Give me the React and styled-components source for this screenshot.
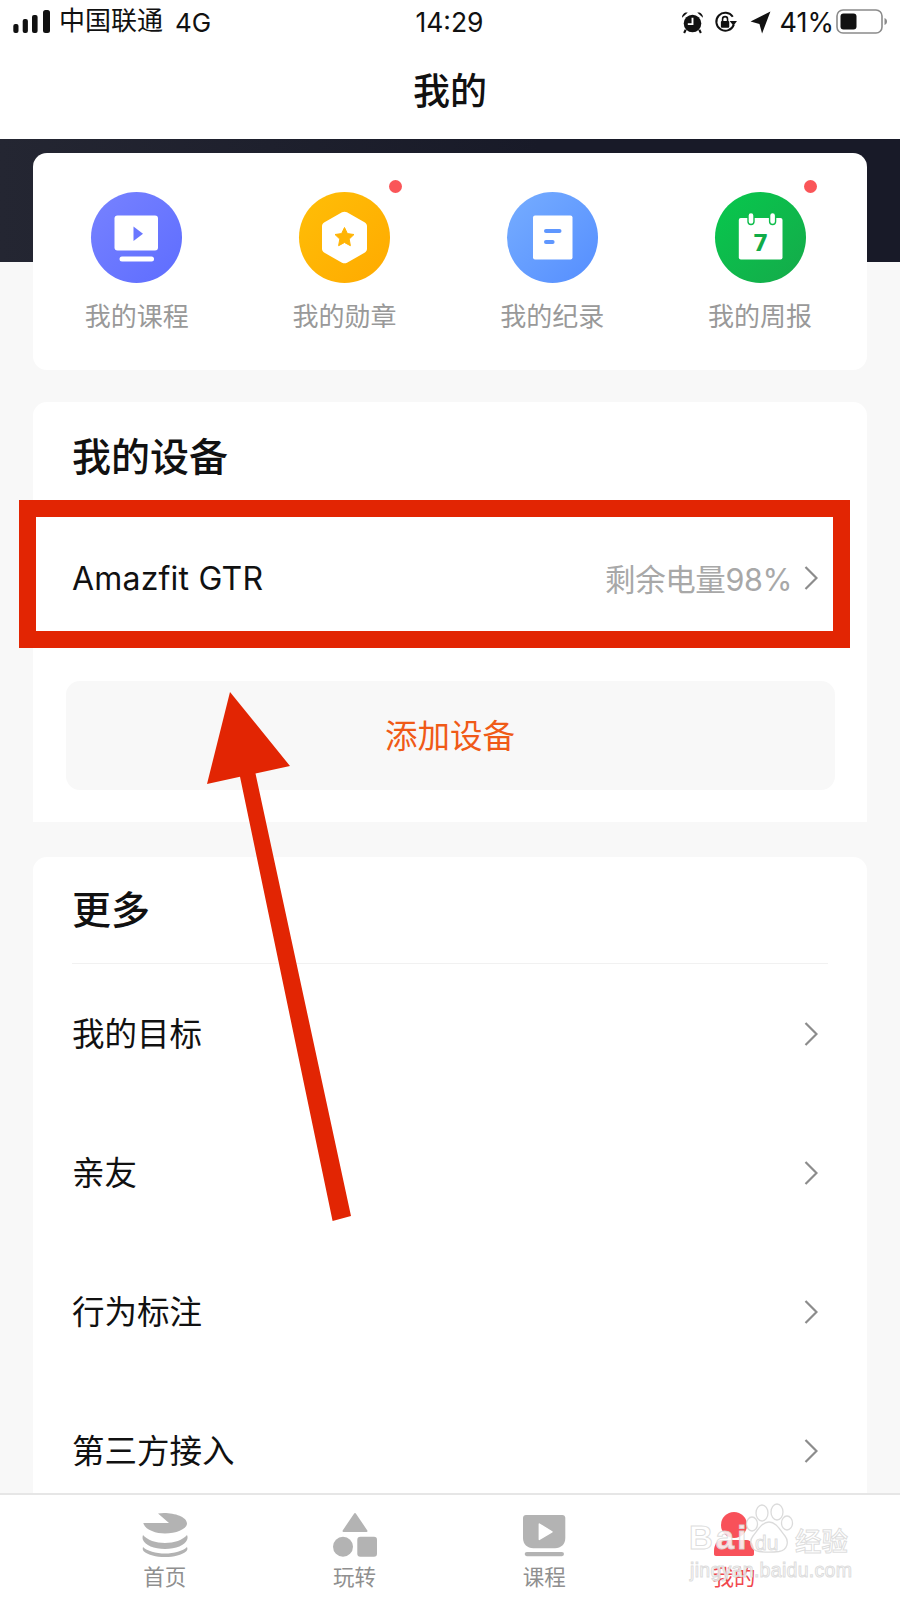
import React from "react";
import styled, { createGlobalStyle } from "styled-components";

const Global = createGlobalStyle`
  html, body { margin: 0; padding: 0; background: #fff; }
  body { font-family: Inter, "Noto Sans CJK SC", sans-serif; color: #111; }
  * { box-sizing: border-box; }
`;

const Page = styled.div`
  position: relative;
  width: 900px;
  height: 1600px;
  overflow: hidden;
  background: #f8f8f8;
  display: flex;
  flex-direction: column;
`;

const StatusBar = styled.header`
  height: 44px;
  background: #fff;
  display: grid;
  grid-template-columns: 1fr auto 1fr;
  align-items: center;
  padding: 0 12px 0 13px;
  color: #111;
`;
const StatusLeft = styled.div`
  display: flex;
  align-items: center;
`;
const Carrier = styled.span`
  margin-left: 9px;
  font-size: 26px;
  line-height: 40px;
  margin-top: -2px;
`;
const Network = styled.span`
  margin-left: 12px;
  font-size: 26px;
`;
const Clock = styled.span`
  font-size: 26.5px;
  margin-right: 2px;
`;
const StatusRight = styled.div`
  display: flex;
  align-items: center;
  justify-content: flex-end;
`;
const StatusIconGap = styled.span`
  width: ${(p) => p.$w}px;
`;
const Percent = styled.span`
  font-size: 27px;
  margin: 0 2px 0 9px;
`;

const NavBar = styled.div`
  height: 95px;
  background: #fff;
  display: flex;
  align-items: center;
  justify-content: center;
  padding-bottom: 6px;
  font-size: 37px;
  font-weight: 500;
  color: #111;
`;

const Content = styled.main`
  flex: 1;
  min-height: 0;
  padding: 14px 33px 0;
  display: flex;
  flex-direction: column;
  background:
    linear-gradient(90deg, #242632 0%, #24263a00 60%) top left / 100% 123px no-repeat,
    linear-gradient(#181a28, #181a28) top left / 100% 123px no-repeat,
    #f8f8f8;
`;

const Card = styled.section`
  background: #fff;
  border-radius: ${(p) => (p.$flatBottom ? "14px 14px 0 0" : "14px")};
  margin-top: ${(p) => p.$top || 0}px;
  flex: ${(p) => (p.$grow ? 1 : "none")};
`;

const ShortcutGrid = styled.div`
  display: grid;
  grid-template-columns: repeat(4, 1fr);
  height: 217px;
  padding: 38.5px 3px 0 0;
`;
const Shortcut = styled.div`
  position: relative;
  display: flex;
  flex-direction: column;
  align-items: center;
`;
const Dot = styled.span`
  position: absolute;
  top: -11.5px;
  left: 148px;
  width: 13px;
  height: 13px;
  border-radius: 50%;
  background: #fa5558;
`;
const Disc = styled.div`
  width: 91px;
  height: 91px;
  border-radius: 50%;
  background: linear-gradient(135deg, ${(p) => p.$from}, ${(p) => p.$to});
  display: flex;
`;
const ShortcutLabel = styled.span`
  margin-top: 16.5px;
  font-size: 26px;
  line-height: 36px;
  color: #999;
`;

const SectionTitle = styled.h2`
  margin: 0;
  height: ${(p) => p.$h}px;
  padding: ${(p) => (p.$rule ? "0 0 6px" : "0 39px 8px")};
  margin-inline: ${(p) => (p.$rule ? "39px" : "0")};
  display: flex;
  align-items: center;
  font-size: 39px;
  font-weight: 500;
  color: #111;
  border-bottom: ${(p) => (p.$rule ? "1px solid #f1f1f1" : "none")};
`;

const Row = styled.div`
  position: relative;
  height: ${(p) => p.$h}px;
  display: flex;
  align-items: center;
  justify-content: space-between;
  padding: 0 49px 0 39px;
  font-size: 32.5px;
  color: #111;
`;
const RowLabel = styled.span`
  padding-bottom: 4px;
`;
const DeviceName = styled.span`
  font-size: 32px;
  letter-spacing: 0.2px;
`;
const RowRight = styled.div`
  display: flex;
  align-items: center;
  gap: 12px;
`;
const Battery = styled.span`
  font-size: 30.5px;
  letter-spacing: -0.4px;
  color: #a8a8a8;
`;
const Highlight = styled.div`
  position: absolute;
  top: -14px;
  bottom: -6px;
  left: -14.5px;
  right: 17px;
  border: 17px solid #e22503;
  pointer-events: none;
`;
const AddButton = styled.div`
  margin: 39px 32.5px 32px;
  height: 109px;
  border-radius: 14px;
  background: #f8f8f8;
  display: flex;
  align-items: center;
  justify-content: center;
  padding-bottom: 4px;
  font-size: 32.5px;
  color: #f05a17;
`;

const TabBar = styled.nav`
  height: 107px;
  flex: none;
  background: #fff;
  border-top: 2px solid #e6e6e6;
  display: grid;
  grid-template-columns: repeat(4, 1fr);
  padding: 17px 71px 0 70px;
`;
const Tab = styled.div`
  display: flex;
  flex-direction: column;
  align-items: center;
  color: ${(p) => (p.$active ? "#f0474d" : "#8f8f8f")};
  font-size: 21.5px;
  line-height: 28px;
`;
const TabText = styled.span`
  margin-top: 5px;
`;

const Arrow = styled.svg`
  position: absolute;
  left: 200px;
  top: 688px;
  pointer-events: none;
`;

const Watermark = styled.div`
  position: absolute;
  left: 688px;
  top: 1503px;
  width: 170px;
  height: 82px;
  pointer-events: none;
  color: rgba(255, 255, 255, 0.85);
  -webkit-text-stroke: 1px rgba(215, 215, 215, 0.85);
`;
const MarkBai = styled.span`
  position: absolute;
  left: 1px;
  top: 16px;
  font: 700 33px/38px "Liberation Sans", sans-serif;
  letter-spacing: 3px;
`;
const MarkDu = styled.span`
  position: absolute;
  left: 67px;
  top: 27px;
  font: 400 21px/26px "Liberation Sans", sans-serif;
`;
const MarkJing = styled.span`
  position: absolute;
  left: 107px;
  top: 20px;
  font: 500 26.5px/34px "Noto Sans CJK SC", sans-serif;
`;
const MarkUrl = styled.span`
  position: absolute;
  left: 2px;
  top: 54px;
  font: 400 19.5px/26px "Liberation Sans", sans-serif;
  letter-spacing: 0.3px;
`;
const MarkPaw = styled.svg`
  position: absolute;
  left: 56px;
  top: 0;
`;

const Chevron = () => (
  <svg width="14" height="24" viewBox="0 0 14 24" fill="none" stroke="#8c8c8c" strokeWidth="2.2">
    <path d="M1.5 1L12.5 12L1.5 23" />
  </svg>
);

const Signal = () => (
  <svg width="37" height="24" viewBox="0 0 37 24" fill="#111">
    <rect x="0.3" y="14" width="5.2" height="9" rx="2" />
    <rect x="9.7" y="9" width="5.2" height="14" rx="2" />
    <rect x="19" y="5" width="5.6" height="18" rx="2" />
    <rect x="30" y="0" width="7" height="23" rx="2.5" />
  </svg>
);

const AlarmIcon = () => (
  <svg width="23" height="23" viewBox="0 0 22 22" fill="#111">
    <circle cx="11" cy="12" r="8.4" />
    <path d="M1 6.5C1 3 3.5 1 6.5 1.5ZM21 6.5C21 3 18.5 1 15.5 1.5Z" />
    <path d="M4.5 18L3 21M17.5 18L19 21" stroke="#111" strokeWidth="2" />
    <path d="M11 6.5V12.5H6.5" stroke="#fff" strokeWidth="1.8" fill="none" />
  </svg>
);

const RotationIcon = () => (
  <svg width="24" height="23" viewBox="0 0 23 22" fill="none" stroke="#111">
    <path d="M19 13A8.6 8.6 0 1 1 18 5.5" strokeWidth="1.9" />
    <path d="M15 9.5H22L18.7 14Z" fill="#111" stroke="none" />
    <rect x="6.6" y="9.6" width="8" height="6.4" rx="1" fill="#111" stroke="none" />
    <path d="M8.2 9.8V7.8A2.4 2.4 0 0 1 13 7.8V9.8" strokeWidth="1.5" />
  </svg>
);

const LocationIcon = () => (
  <svg width="21" height="23" viewBox="0 0 20 22" fill="#111">
    <path d="M19.5 0.5L11.5 21.5L9 12.5L0.5 10Z" />
  </svg>
);

const BatteryIcon = () => (
  <svg width="52" height="26" viewBox="0 0 52 26" fill="none">
    <rect x="1" y="1" width="45" height="23" rx="6" stroke="#8b8b8b" strokeWidth="1.6" />
    <rect x="4.5" y="4.5" width="16" height="16" rx="3" fill="#111" />
    <path d="M48.5 9C50.5 10 51 11 51 12.5C51 14 50.5 15 48.5 16Z" fill="#8b8b8b" />
  </svg>
);

const CourseGlyph = () => (
  <svg width="91" height="91" viewBox="0 0 91 91">
    <rect x="23.5" y="23.5" width="43.5" height="35" rx="3" fill="#fff" />
    <path d="M42.5 34.5L52 41.7L42.5 49Z" fill="#6a77ff" />
    <rect x="28.5" y="64.5" width="34.5" height="5" rx="2.5" fill="#fff" />
  </svg>
);

const BadgeGlyph = () => (
  <svg width="91" height="91" viewBox="0 0 91 91">
    <path
      d="M43 20.3C44.6 19.4 46.4 19.4 48 20.3L65.5 30.2C67.1 31.1 68 32.6 68 34.3V56.7C68 58.4 67.1 59.9 65.5 60.8L48 70.7C46.4 71.6 44.6 71.6 43 70.7L25.5 60.8C23.9 59.9 23 58.4 23 56.7V34.3C23 32.6 23.9 31.1 25.5 30.2Z"
      fill="#fff"
    />
    <path
      d="M45.5 35.5L48.4 41.6L55 42.5L50.2 47.1L51.4 53.7L45.5 50.5L39.6 53.7L40.8 47.1L36 42.5L42.6 41.6Z"
      fill="#ffb405"
      stroke="#ffb405"
      strokeWidth="1"
      strokeLinejoin="round"
    />
  </svg>
);

const NoteGlyph = () => (
  <svg width="91" height="91" viewBox="0 0 91 91">
    <rect x="26" y="23.5" width="39.5" height="44" rx="2" fill="#fff" />
    <rect x="37" y="37" width="17.5" height="4" rx="2" fill="#5f97ff" />
    <rect x="37" y="48" width="10.6" height="4" rx="2" fill="#5f97ff" />
  </svg>
);

const CalendarGlyph = () => (
  <svg width="91" height="91" viewBox="0 0 91 91">
    <rect x="23.8" y="26" width="43.7" height="41.5" rx="2" fill="#fff" />
    <rect x="33" y="20.5" width="6" height="12" rx="3" fill="#fff" stroke="#0dbd4b" strokeWidth="1.4" />
    <rect x="54.6" y="20.5" width="6" height="12" rx="3" fill="#fff" stroke="#0dbd4b" strokeWidth="1.4" />
    <text
      x="45.6"
      y="58.5"
      textAnchor="middle"
      fontFamily="Roboto, sans-serif"
      fontWeight="900"
      fontSize="24"
      fill="#10ab48"
    >
      7
    </text>
  </svg>
);

const HomeIcon = () => (
  <svg width="46" height="46" viewBox="0 0 46 46" fill="#b3b3b3">
    <path d="M16 1.5L27 11H1.3C3 18 14 21.5 23 21.5C34 21.5 45 17 45 11.5C45 5 33 1 22 1C20 1 18 1.2 16 1.5Z" />
    <path d="M1 23C5 28 14 31 23 31C32 31 41 28 45 23C46 25 45.5 27 45 28C43 33 34 37 23 37C12 37 3 33 1 28C0.5 27 0.3 25 1 23Z" />
    <path d="M1 35C5 39 14 41.5 23 41.5C32 41.5 41 39 45 35C46 37 45 38.5 44 39.5C40 43 32 45 23 45C14 45 6 43 2 39.5C1 38.5 0.3 37 1 35Z" />
  </svg>
);

const PlayIcon = () => (
  <svg width="46" height="46" viewBox="0 0 46 46" fill="#b3b3b3">
    <path d="M5 3H41.3C43 3 44.3 4.3 44.3 6V26C44.3 32 40 36.3 34 36.3H12.3C6.3 36.3 2 32 2 26V6C2 4.3 3.3 3 5 3Z" />
    <path d="M18.3 12L31 19.8L18.3 27.5Z" fill="#fff" stroke="#fff" strokeWidth="1.4" strokeLinejoin="round" />
    <rect x="3.7" y="40" width="39.3" height="4.2" rx="2.1" />
  </svg>
);

const ShapesIcon = () => (
  <svg width="46" height="46" viewBox="0 0 46 46" fill="#b3b3b3">
    <path d="M23 2L34.5 19H11.5Z" stroke="#b3b3b3" strokeWidth="2" strokeLinejoin="round" />
    <circle cx="11" cy="34.7" r="10" />
    <rect x="25.3" y="24.7" width="19.7" height="20" rx="3" />
  </svg>
);

const ProfileIcon = () => (
  <svg width="46" height="46" viewBox="0 0 46 46" fill="#f8515a">
    <circle cx="23" cy="13" r="13" />
    <path d="M10 28H36C40 28 43 33 43 39V42C43 43.2 42.2 44 41 44H5C3.8 44 3 43.2 3 42V39C3 33 6 28 10 28Z" />
  </svg>
);

const shortcuts = [
  { label: "我的课程", from: "#7782ff", to: "#5e6dff", glyph: <CourseGlyph /> },
  { label: "我的勋章", from: "#ffbe07", to: "#ffaa00", glyph: <BadgeGlyph />, dot: true },
  { label: "我的纪录", from: "#76adff", to: "#558eff", glyph: <NoteGlyph /> },
  { label: "我的周报", from: "#07c84d", to: "#15aa4a", glyph: <CalendarGlyph />, dot: true },
];

const moreRows = ["我的目标", "亲友", "行为标注", "第三方接入"];

const tabs = [
  { label: "首页", icon: <HomeIcon /> },
  { label: "玩转", icon: <ShapesIcon /> },
  { label: "课程", icon: <PlayIcon /> },
  { label: "我的", icon: <ProfileIcon />, active: true },
];

export default function App() {
  return (
    <>
      <Global />
      <Page>
        <StatusBar>
          <StatusLeft>
            <Signal />
            <Carrier>中国联通</Carrier>
            <Network>4G</Network>
          </StatusLeft>
          <Clock>14:29</Clock>
          <StatusRight>
            <AlarmIcon />
            <StatusIconGap $w={10} />
            <RotationIcon />
            <StatusIconGap $w={12} />
            <LocationIcon />
            <Percent>41%</Percent>
            <BatteryIcon />
          </StatusRight>
        </StatusBar>
        <NavBar>我的</NavBar>
        <Content>
          <Card>
            <ShortcutGrid>
              {shortcuts.map((s) => (
                <Shortcut key={s.label}>
                  {s.dot && <Dot />}
                  <Disc $from={s.from} $to={s.to}>{s.glyph}</Disc>
                  <ShortcutLabel>{s.label}</ShortcutLabel>
                </Shortcut>
              ))}
            </ShortcutGrid>
          </Card>
          <Card $top={32} $flatBottom>
            <SectionTitle $h={112}>我的设备</SectionTitle>
            <Row $h={128}>
              <DeviceName>Amazfit GTR</DeviceName>
              <RowRight>
                <Battery>剩余电量98%</Battery>
                <Chevron />
              </RowRight>
              <Highlight />
            </Row>
            <AddButton>添加设备</AddButton>
          </Card>
          <Card $top={35} $grow $flatBottom>
            <SectionTitle $h={107} $rule>更多</SectionTitle>
            {moreRows.map((r) => (
              <Row key={r} $h={139}>
                <RowLabel>{r}</RowLabel>
                <Chevron />
              </Row>
            ))}
          </Card>
        </Content>
        <TabBar>
          {tabs.map((t) => (
            <Tab key={t.label} $active={t.active}>
              {t.icon}
              <TabText>{t.label}</TabText>
            </Tab>
          ))}
        </TabBar>
        <Arrow width="160" height="540" viewBox="200 688 160 540">
          <path
            d="M230 692L290 766L255.5 773.4L351 1216L332.6 1221L240 776.8L207 784Z"
            fill="#e22503"
          />
        </Arrow>
        <Watermark>
          <MarkPaw width="64" height="54" viewBox="0 0 64 54" fill="rgba(255,255,255,.7)" stroke="rgba(215,215,215,.9)" strokeWidth="1.3">
            <ellipse cx="18" cy="10" rx="6" ry="8" />
            <ellipse cx="33" cy="9" rx="6" ry="8" />
            <ellipse cx="8" cy="21" rx="5.5" ry="7" />
            <ellipse cx="43" cy="20" rx="5.5" ry="7" />
            <path d="M25 19C32 19 36 27 41 33C45 38 44 47 35 48.5C29 49.3 21 49.3 15 48.5C6 47 5 38 9 33C14 27 18 19 25 19Z" />
          </MarkPaw>
          <MarkBai>Bai</MarkBai>
          <MarkDu>du</MarkDu>
          <MarkJing>经验</MarkJing>
          <MarkUrl>jingyan.baidu.com</MarkUrl>
        </Watermark>
      </Page>
    </>
  );
}
